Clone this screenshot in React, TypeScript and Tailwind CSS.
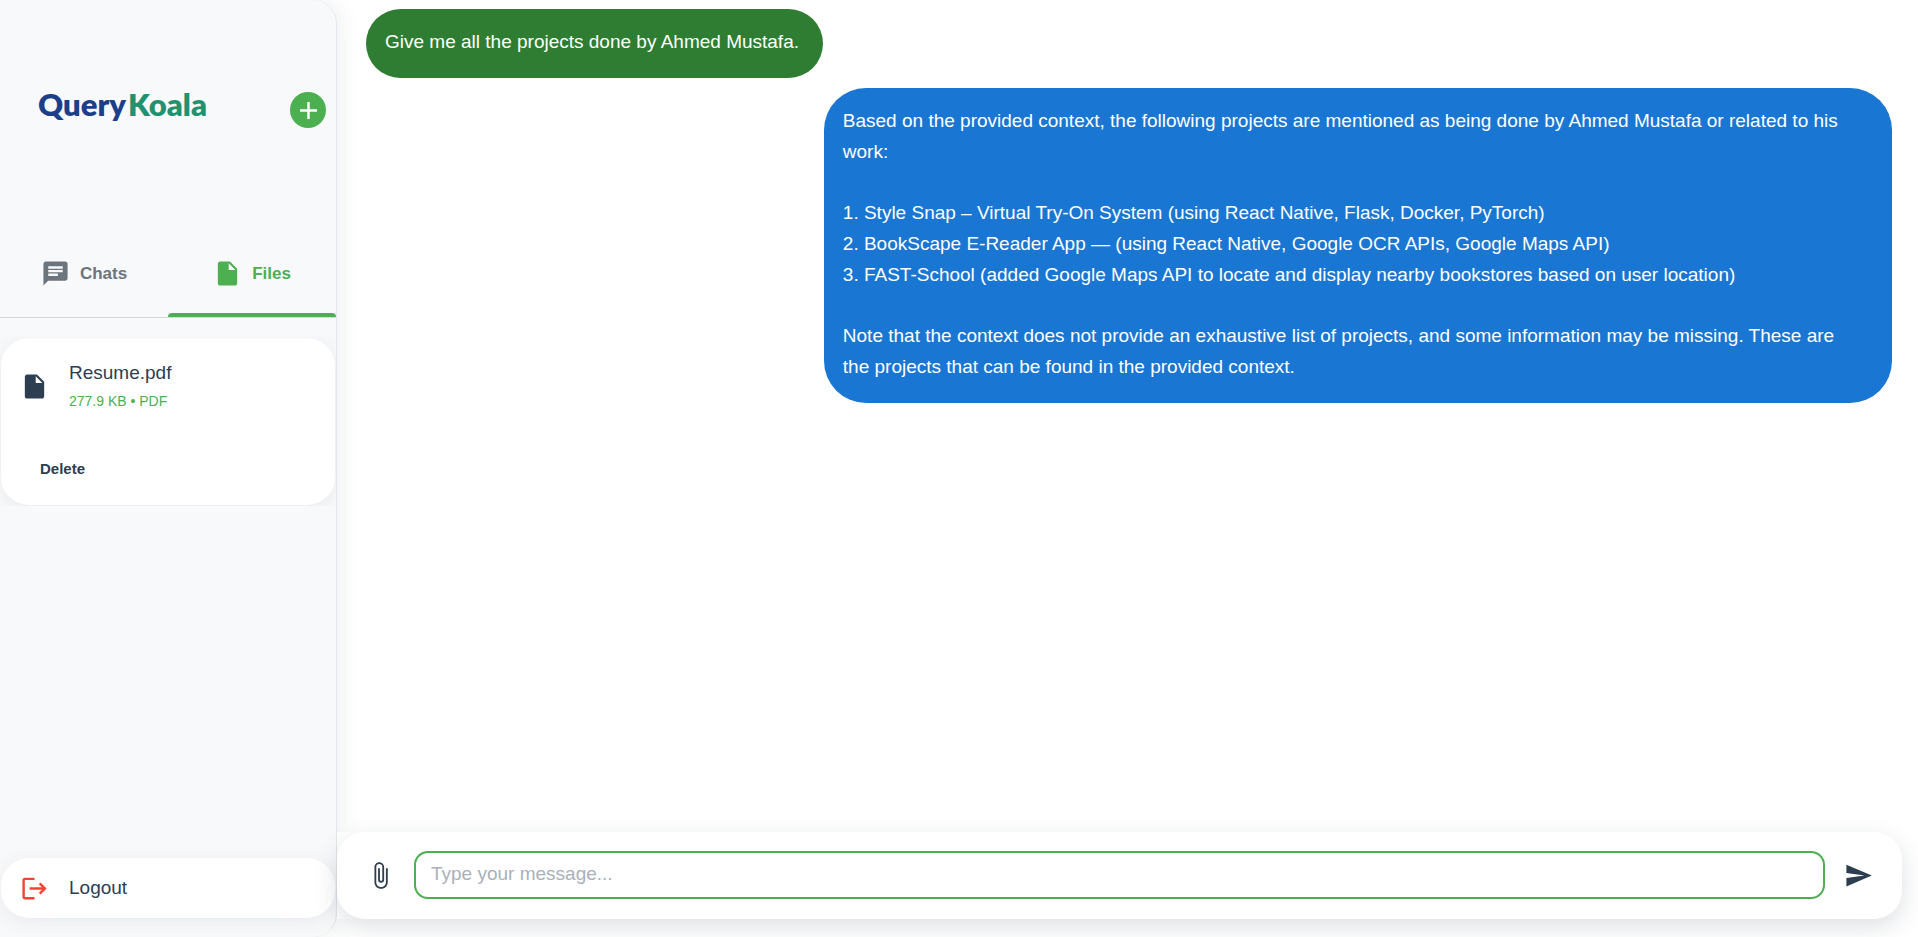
import { FormEvent, useState } from "react";
import {
  MdAdd,
  MdAttachFile,
  MdChat,
  MdInsertDriveFile,
  MdLogout,
  MdSend,
} from "react-icons/md";

type Message = { from: "user" | "assistant"; text: string };

const initialMessages: Message[] = [
  { from: "user", text: "Give me all the projects done by Ahmed Mustafa." },
  {
    from: "assistant",
    text: `Based on the provided context, the following projects are mentioned as being done by Ahmed Mustafa or related to his work:

1. Style Snap – Virtual Try-On System (using React Native, Flask, Docker, PyTorch)
2. BookScape E-Reader App — (using React Native, Google OCR APIs, Google Maps API)
3. FAST-School (added Google Maps API to locate and display nearby bookstores based on user location)

Note that the context does not provide an exhaustive list of projects, and some information may be missing. These are the projects that can be found in the provided context.`,
  },
];

function Logo() {
  return (
    <h1 className="flex gap-[2px] pb-3 font-['Lato',sans-serif] text-[31px] leading-10 font-extrabold">
      <span className="text-[#1d3f8a]">Query</span>
      <span className="text-[#1f9270]">Koala</span>
    </h1>
  );
}

function Tabs() {
  return (
    <div role="tablist" className="grid grid-cols-2 border-b border-[#d5d9dd] text-[17px] font-bold">
      <button
        role="tab"
        aria-selected="false"
        className="flex h-[87px] items-center justify-center gap-[10px] text-[#6c757d]"
      >
        <MdChat size={29} />
        Chats
      </button>
      <button
        role="tab"
        aria-selected="true"
        className="relative flex h-[87px] items-center justify-center gap-[10px] text-[#4caf50] after:absolute after:inset-x-0 after:bottom-0 after:h-1 after:rounded-t after:bg-[#4caf50]"
      >
        <MdInsertDriveFile size={29} />
        Files
      </button>
    </div>
  );
}

function FileCard() {
  return (
    <li className="rounded-[28px] bg-white px-[19px] pt-[19px] pb-4 shadow-[0_4px_20px_rgba(44,62,80,0.08)]">
      <div className="flex items-center gap-[20px]">
        <MdInsertDriveFile size={29} className="text-[#2c3e50]" />
        <div>
          <p className="text-[19px] leading-[31px]">Resume.pdf</p>
          <p className="text-[14px] leading-[27px] text-[#4caf50]">277.9 KB • PDF</p>
        </div>
      </div>
      <button className="mt-[34px] flex h-10 items-center px-5 text-[15px] font-bold">Delete</button>
    </li>
  );
}

function Sidebar() {
  return (
    <aside className="flex w-[337px] shrink-0 flex-col rounded-r-[24px] border-r border-[#e4e7ea] bg-[#f8f9fb] pb-[19px] shadow-[0_0_24px_rgba(44,62,80,0.10)]">
      <div className="mb-[10px] flex h-[220px] items-center justify-between pr-[10px] pl-[38px]">
        <Logo />
        <button
          aria-label="New"
          className="flex size-9 items-center justify-center rounded-full bg-[#4caf50] text-white"
        >
          <MdAdd size={29} />
        </button>
      </div>
      <Tabs />
      <ul className="mt-[19px] overflow-hidden p-px">
        <FileCard />
      </ul>
      <button className="mx-px mt-auto flex h-[60px] items-center gap-[20px] rounded-[28px] bg-white px-[19px] text-[19px] shadow-[0_4px_20px_rgba(44,62,80,0.08)]">
        <MdLogout size={29} className="text-[#f44336]" />
        Logout
      </button>
    </aside>
  );
}

function Bubble({ message }: { message: Message }) {
  const look =
    message.from === "user"
      ? "self-start bg-[#2e7d32] pr-6"
      : "self-end bg-[#1976d2] pr-7";
  return (
    <div
      className={`flex max-w-[70%] flex-col gap-[30px] rounded-[42px] pt-[17px] pb-[21px] pl-[19px] text-[19px] leading-[31px] text-white ${look}`}
    >
      {message.text.split("\n\n").map((paragraph, index) => (
        <p key={index} className="whitespace-pre-wrap">
          {paragraph}
        </p>
      ))}
    </div>
  );
}

function Composer({ onSend }: { onSend: (text: string) => void }) {
  const [text, setText] = useState("");
  const submit = (event: FormEvent) => {
    event.preventDefault();
    if (!text.trim()) return;
    onSend(text.trim());
    setText("");
  };
  return (
    <div className="mb-[18px] bg-white pr-4">
      <form
        onSubmit={submit}
        className="flex items-center gap-[19px] rounded-[28px] bg-white px-[29px] pt-[19px] pb-5 shadow-[0_8px_24px_rgba(44,62,80,0.16)]"
      >
        <button type="button" aria-label="Attach a file">
          <MdAttachFile size={29} />
        </button>
        <input
          aria-label="Message"
          value={text}
          onChange={(event) => setText(event.target.value)}
          placeholder="Type your message..."
          className="h-12 min-w-0 flex-1 rounded-[14px] border-2 border-[#4caf50] bg-white px-[15px] pb-[2px] text-[19px] outline-none placeholder:text-[#a9b1b8]"
        />
        <button type="submit" aria-label="Send">
          <MdSend size={29} />
        </button>
      </form>
    </div>
  );
}

export default function App() {
  const [messages, setMessages] = useState(initialMessages);
  return (
    <div className="flex h-screen overflow-hidden bg-white font-['Liberation_Sans',Arial,sans-serif] text-[#2c3e50]">
      <Sidebar />
      <main className="flex min-w-0 flex-1 flex-col">
        <div className="flex min-h-0 flex-1 flex-col gap-[10px] overflow-y-auto pt-[9px] pr-[26px] pl-[29px]">
          {messages.map((message, index) => (
            <Bubble key={index} message={message} />
          ))}
        </div>
        <Composer onSend={(text) => setMessages([...messages, { from: "user", text }])} />
      </main>
    </div>
  );
}
